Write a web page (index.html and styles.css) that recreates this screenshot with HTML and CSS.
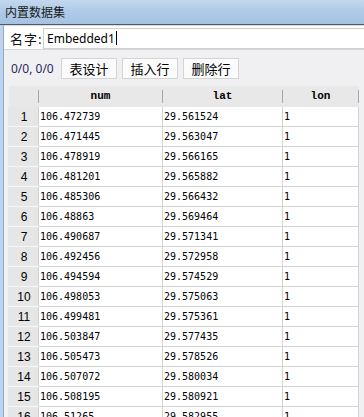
FILE: index.html
```html
<!DOCTYPE html>
<html lang="zh">
<head>
    <meta charset="UTF-8">
    <title>内置数据集</title>
    <link rel="stylesheet" href="styles.css">
</head>
<body>
    <div class="window">
        <div class="titlebar">内置数据集</div>
        <div class="frame">
            <div class="name-row">
                <span class="label">名字:</span>
                <div class="name-input">Embedded1<span class="caret"></span></div>
            </div>
            <div class="toolbar">
                <span class="pos">0/0, 0/0</span>
                <button>表设计</button>
                <button>插入行</button>
                <button>删除行</button>
            </div>
            <div class="grid-wrap">
                <table class="grid">
                    <thead>
                        <tr>
                            <th class="rn"></th>
                            <th class="c-num">num</th>
                            <th class="c-lat">lat</th>
                            <th class="c-lon">lon</th>
                        </tr>
                    </thead>
                    <tbody>
                        <tr><td class="rn">1</td><td>106.472739</td><td>29.561524</td><td>1</td></tr>
                        <tr><td class="rn">2</td><td>106.471445</td><td>29.563047</td><td>1</td></tr>
                        <tr><td class="rn">3</td><td>106.478919</td><td>29.566165</td><td>1</td></tr>
                        <tr><td class="rn">4</td><td>106.481201</td><td>29.565882</td><td>1</td></tr>
                        <tr><td class="rn">5</td><td>106.485306</td><td>29.566432</td><td>1</td></tr>
                        <tr><td class="rn">6</td><td>106.48863</td><td>29.569464</td><td>1</td></tr>
                        <tr><td class="rn">7</td><td>106.490687</td><td>29.571341</td><td>1</td></tr>
                        <tr><td class="rn">8</td><td>106.492456</td><td>29.572958</td><td>1</td></tr>
                        <tr><td class="rn">9</td><td>106.494594</td><td>29.574529</td><td>1</td></tr>
                        <tr><td class="rn">10</td><td>106.498053</td><td>29.575063</td><td>1</td></tr>
                        <tr><td class="rn">11</td><td>106.499481</td><td>29.575361</td><td>1</td></tr>
                        <tr><td class="rn">12</td><td>106.503847</td><td>29.577435</td><td>1</td></tr>
                        <tr><td class="rn">13</td><td>106.505473</td><td>29.578526</td><td>1</td></tr>
                        <tr><td class="rn">14</td><td>106.507072</td><td>29.580034</td><td>1</td></tr>
                        <tr><td class="rn">15</td><td>106.508195</td><td>29.580921</td><td>1</td></tr>
                        <tr><td class="rn">16</td><td>106.51265</td><td>29.582955</td><td>1</td></tr>
                    </tbody>
                </table>
            </div>
        </div>
    </div>
</body>
</html>
```

FILE: styles.css
```css
body {
    margin: 0;
    width: 364px;
    height: 417px;
    overflow: hidden;
    font-family: "Noto Sans CJK SC", sans-serif;
    background-color: #f0f0f3;
}
.window {
    display: flex;
    flex-direction: column;
    height: 417px;
}
.titlebar {
    height: 24px;
    line-height: 24px;
    padding-left: 5px;
    font-size: 12px;
    color: #1a1a1a;
    background: linear-gradient(180deg, #c3d8ee 0%, #afcbe8 45%, #a5c2e2 100%);
    border-bottom: 1px solid #4c5a6e;
}
.frame {
    flex: 1;
    border-left: 3px solid #bcd4ee;
    position: relative;
}
.frame::before {
    content: "";
    position: absolute;
    left: 0;
    top: 0;
    bottom: 0;
    width: 1px;
    background-color: #98a8b8;
}
.name-row {
    display: flex;
    align-items: center;
    height: 22px;
    padding-top: 1px;
    background-color: #ffffff;
    border-top: 1px solid #dadada;
    border-bottom: 1px solid #d6d6d6;
}
.label {
    margin-left: 7px;
    width: 33px;
    font-size: 13px;
    letter-spacing: 1px;
    color: #111;
}
.name-input {
    flex: 1;
    height: 19px;
    line-height: 19px;
    border: 1px solid #d0d0d0;
    border-right: none;
    padding-left: 3px;
    font-family: "Noto Sans", sans-serif;
    font-size: 12px;
    color: #000;
}
.caret {
    display: inline-block;
    width: 1px;
    height: 14px;
    margin-left: 1px;
    vertical-align: -2px;
    background-color: #000;
}
.toolbar {
    display: flex;
    align-items: center;
    height: 36px;
    padding-left: 8px;
}
.pos {
    width: 50px;
    font-family: "Noto Sans", sans-serif;
    font-size: 12px;
    color: #2a2a5a;
}
.toolbar button {
    width: 56px;
    height: 21px;
    margin-right: 5px;
    padding: 0;
    font-family: "Noto Sans CJK SC", sans-serif;
    font-size: 13px;
    line-height: 19px;
    color: #000;
    background-color: #fbfbfb;
    border: 1px solid #d4d4d4;
}
.grid-wrap {
    padding-left: 5px;
}
.grid {
    border-collapse: collapse;
    table-layout: fixed;
    width: 351px;
    font-family: "DejaVu Sans Mono", monospace;
    font-size: 10px;
    color: #000;
}
.grid th {
    height: 20px;
    padding: 0;
    font-family: "Liberation Mono", monospace;
    font-size: 11px;
    font-weight: bold;
    text-align: center;
    background-color: #e8e8e8;
    border-bottom: 1px solid #e8e8e8;
    position: relative;
}
.grid th::after {
    content: "";
    position: absolute;
    right: 0;
    top: 4px;
    height: 13px;
    width: 1px;
    background-color: #a8a8a8;
}
.grid th.rn { width: 30px; }
.grid th.c-num { width: 124px; }
.grid th.c-lat { width: 120px; }
.grid th.c-lon { width: 76px; }
.grid td {
    height: 19px;
    padding: 0 0 0 1px;
    background-color: #ffffff;
    border: 1px solid #d3d3d3;
    white-space: nowrap;
    overflow: hidden;
}
.grid td.rn {
    text-align: center;
    font-family: "Liberation Sans", sans-serif;
    font-size: 12px;
    background-color: #e6e6e6;
    border-color: #f6f6f6 #d3d3d3 #f6f6f6 #e6e6e6;
}
```
